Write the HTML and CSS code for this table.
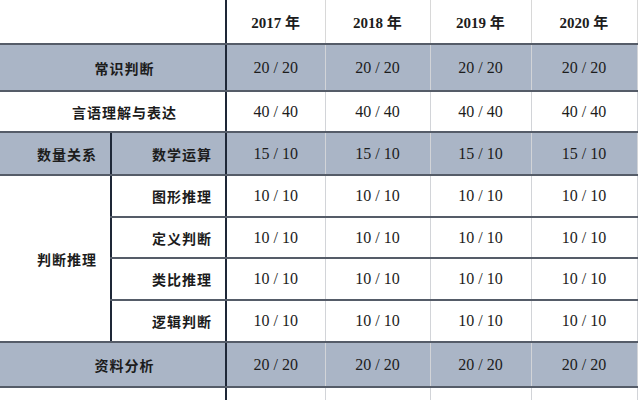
FILE: index.html
```html
<!DOCTYPE html>
<html lang="zh-CN">
<head>
<meta charset="utf-8">
<title>题量分布</title>
<link rel="stylesheet" href="styles.css">
</head>
<body>
<table class="grid">
  <colgroup>
    <col class="c1"><col class="c2"><col class="c3"><col class="c4"><col class="c5"><col class="c6">
  </colgroup>
  <tr class="r-head">
    <td class="lbl" colspan="2"></td>
    <td class="yr split">2017 年</td>
    <td class="yr thin">2018 年</td>
    <td class="yr thin">2019 年</td>
    <td class="yr thin">2020 年</td>
  </tr>
  <tr class="r1 shade">
    <td class="lbl" colspan="2">常识判断</td>
    <td class="num split">20 / 20</td>
    <td class="num thin">20 / 20</td>
    <td class="num thin">20 / 20</td>
    <td class="num thin">20 / 20</td>
  </tr>
  <tr class="r2">
    <td class="lbl" colspan="2">言语理解与表达</td>
    <td class="num split">40 / 40</td>
    <td class="num thin">40 / 40</td>
    <td class="num thin">40 / 40</td>
    <td class="num thin">40 / 40</td>
  </tr>
  <tr class="r3 shade">
    <td class="lbl">数量关系</td>
    <td class="lbl sub">数学运算</td>
    <td class="num split">15 / 10</td>
    <td class="num thin">15 / 10</td>
    <td class="num thin">15 / 10</td>
    <td class="num thin">15 / 10</td>
  </tr>
  <tr class="r4">
    <td class="lbl group" rowspan="4">判断推理</td>
    <td class="lbl sub">图形推理</td>
    <td class="num split">10 / 10</td>
    <td class="num thin">10 / 10</td>
    <td class="num thin">10 / 10</td>
    <td class="num thin">10 / 10</td>
  </tr>
  <tr class="r5">
    <td class="lbl sub">定义判断</td>
    <td class="num split">10 / 10</td>
    <td class="num thin">10 / 10</td>
    <td class="num thin">10 / 10</td>
    <td class="num thin">10 / 10</td>
  </tr>
  <tr class="r6">
    <td class="lbl sub">类比推理</td>
    <td class="num split">10 / 10</td>
    <td class="num thin">10 / 10</td>
    <td class="num thin">10 / 10</td>
    <td class="num thin">10 / 10</td>
  </tr>
  <tr class="r7">
    <td class="lbl sub">逻辑判断</td>
    <td class="num split">10 / 10</td>
    <td class="num thin">10 / 10</td>
    <td class="num thin">10 / 10</td>
    <td class="num thin">10 / 10</td>
  </tr>
  <tr class="r8 shade">
    <td class="lbl" colspan="2">资料分析</td>
    <td class="num split">20 / 20</td>
    <td class="num thin">20 / 20</td>
    <td class="num thin">20 / 20</td>
    <td class="num thin">20 / 20</td>
  </tr>
  <tr class="r9">
    <td class="lbl" colspan="2"></td>
    <td class="num split"></td>
    <td class="num thin"></td>
    <td class="num thin"></td>
    <td class="num thin"></td>
  </tr>
</table>
</body>
</html>
```

FILE: styles.css
```css
html, body {
  margin: 0;
  padding: 0;
  background: #ffffff;
  overflow: hidden;
}

.grid {
  border-collapse: collapse;
  table-layout: fixed;
  width: 637px;
  color: #1c1c1c;
}

.c1 { width: 111px; }
.c2 { width: 115px; }
.c3 { width: 99px; }
.c4 { width: 105px; }
.c5 { width: 101px; }
.c6 { width: 106px; }

.grid td {
  padding: 0;
  text-align: center;
  vertical-align: middle;
  border-bottom: 2px solid #555c68;
  border-right: 1px solid #d2d4d8;
}

.grid tr.r-head td { border-right-color: #d8d8d8; }

.shade td { background: #aab5c6; }

.lbl {
  font-family: "Noto Sans CJK SC", "Liberation Serif", serif;
  font-weight: 700;
  font-size: 14px;
  letter-spacing: 1px;
  padding-left: 24px !important;
  text-align: center;
}

.sub {
  border-left: 2px solid #1e2737;
  padding-left: 27px !important;
}

.split { border-left: 2px solid #1e2737; }

.yr {
  font-family: "Liberation Serif", "Noto Sans CJK SC", serif;
  font-weight: 700;
  font-size: 15px;
}

.num {
  font-family: "Liberation Serif", serif;
  font-size: 16px;
}

.r-head td { height: 43px; }
.r1 td { height: 45px; }
.r2 td { height: 39px; }
.r3 td { height: 41px; }
.r4 td { height: 40px; }
.r5 td { height: 39px; }
.r6 td { height: 40px; }
.r7 td { height: 40px; }
.r8 td { height: 43px; }
.r9 td { height: 30px; border-bottom: none; }
```
